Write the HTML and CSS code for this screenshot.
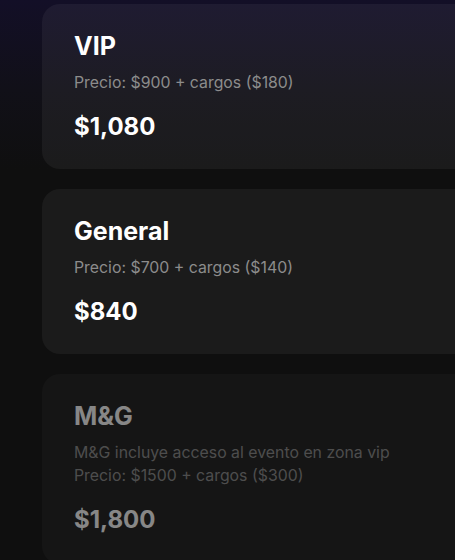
FILE: index.html
```html
<!DOCTYPE html>
<html lang="es">
<head>
<meta charset="utf-8">
<link rel="stylesheet" href="styles.css">
</head>
<body>
<main class="list">
  <section class="card">
    <h2 class="title">VIP</h2>
    <p class="desc">Precio: $900 + cargos ($180)</p>
    <p class="price">$1,080</p>
  </section>
  <section class="card">
    <h2 class="title">General</h2>
    <p class="desc">Precio: $700 + cargos ($140)</p>
    <p class="price">$840</p>
  </section>
  <section class="card card--disabled">
    <h2 class="title">M&amp;G</h2>
    <p class="desc">M&amp;G incluye acceso al evento en zona vip<br>Precio: $1500 + cargos ($300)</p>
    <p class="price">$1,800</p>
  </section>
</main>
</body>
</html>
```
FILE: styles.css
```css
html, body {
  margin: 0;
  padding: 0;
}
body {
  width: 455px;
  height: 560px;
  overflow: hidden;
  font-family: Inter, "Noto Sans", sans-serif;
  background: linear-gradient(to bottom, #130f27 0px, #111018 90px, #0f0f0f 170px, #0f0f0f 100%);
}
.list {
  display: flex;
  flex-direction: column;
  gap: 20px;
  padding: 4px 0 0 42px;
}
.card {
  width: 520px;
  box-sizing: border-box;
  height: 165px;
  padding: 27px 32px 27px;
  border-radius: 18px;
  background: rgba(255, 255, 255, 0.05);
}
.card--disabled {
  opacity: 0.5;
  height: 190px;
}
.title {
  margin: 0;
  font-size: 25px;
  line-height: 30px;
  font-weight: 700;
  color: #ffffff;
}
.desc {
  margin: 10px 0 0;
  font-size: 15.85px;
  line-height: 23px;
  color: #8c8c8c;
}
.price {
  margin: 18px 0 0;
  font-size: 24px;
  line-height: 30px;
  font-weight: 700;
  color: #ffffff;
}
```
